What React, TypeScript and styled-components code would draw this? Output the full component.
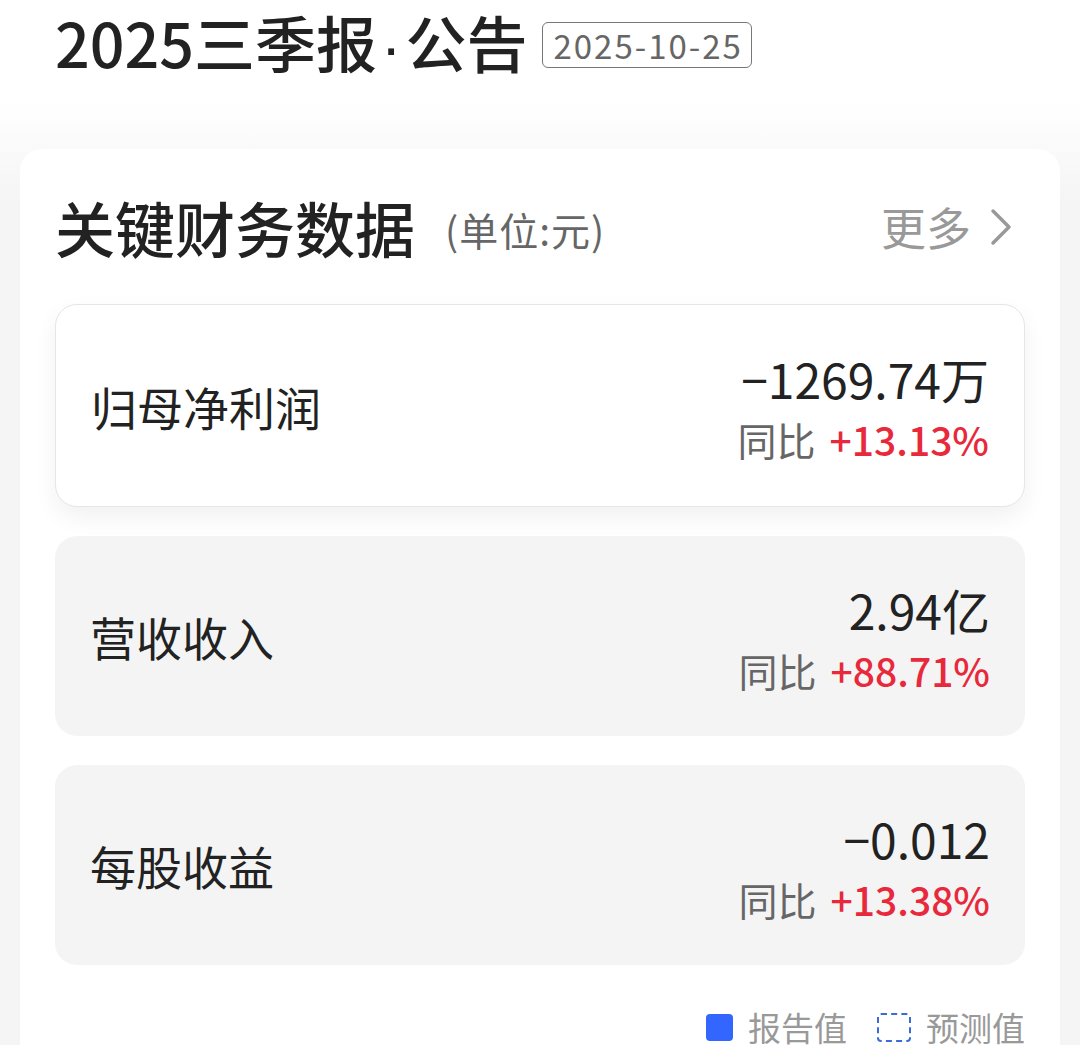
import * as React from "react";
import styled, { createGlobalStyle } from "styled-components";

const GlobalStyle = createGlobalStyle`
  html, body {
    margin: 0;
    padding: 0;
    background: #f5f5f5;
  }
  body {
    font-family: "Noto Sans CJK SC", "Noto Sans", sans-serif;
    color: #222;
  }
`;

const Page = styled.div`
  width: 1080px;
  height: 1045px;
  overflow: hidden;
  background: linear-gradient(to bottom, #ffffff 0px, #ffffff 100px, #f5f5f5 200px);
`;

const Header = styled.div`
  display: flex;
  align-items: center;
  gap: 15px;
  height: 90px;
  padding: 0 55px;
`;

const Title = styled.h1`
  margin: 0;
  flex-shrink: 0;
  white-space: nowrap;
  font-size: 61px;
  font-weight: 500;
  color: #222;
  line-height: 1.3;
`;

const Dot = styled.span`
  font-family: "Liberation Sans", sans-serif;
  margin: 0 4px;
`;

const DateBadge = styled.span`
  display: inline-flex;
  align-items: center;
  height: 46px;
  box-sizing: border-box;
  padding: 0 8px 0 10px;
  border: 1px solid #777;
  border-radius: 6px;
  font-size: 33px;
  letter-spacing: 2px;
  color: #666;
  line-height: 1;
`;

const Card = styled.div`
  margin: 59px 20px 0;
  background: #fff;
  border-radius: 22px;
  padding: 0 35px;
  min-height: 960px;
`;

const SectionHead = styled.div`
  display: flex;
  align-items: center;
  height: 155px;
`;

const SectionTitle = styled.h2`
  margin: 0;
  font-size: 60px;
  font-weight: 500;
  color: #222;
  line-height: 1.2;
`;

const Unit = styled.span`
  margin-left: 30px;
  font-size: 39px;
  letter-spacing: 1px;
  color: #666;
  margin-top: 4px;
`;

const More = styled.a`
  margin-left: auto;
  display: flex;
  align-items: center;
  gap: 18px;
  font-size: 45px;
  color: #999;
  text-decoration: none;
  margin-right: 12px;
`;

const List = styled.div`
  display: flex;
  flex-direction: column;
  gap: 29px;
`;

const Row = styled.div<{ $active?: boolean }>`
  display: flex;
  align-items: center;
  justify-content: space-between;
  height: ${({ $active }) => ($active ? "203px" : "200px")};
  box-sizing: border-box;
  padding: 0 35px;
  border-radius: 22px;
  background: ${({ $active }) => ($active ? "#fff" : "#f4f4f4")};
  border: ${({ $active }) => ($active ? "1px solid #e6e6e6" : "none")};
  box-shadow: ${({ $active }) => ($active ? "0 10px 24px rgba(0,0,0,0.06)" : "none")};
`;

const Label = styled.span`
  font-size: 46px;
  color: #222;
`;

const Values = styled.div`
  display: flex;
  flex-direction: column;
  align-items: flex-end;
  gap: 18px;
  margin-top: 2px;
`;

const Amount = styled.span`
  font-size: 48px;
  color: #222;
  line-height: 1;
`;

const Change = styled.span`
  font-size: 39px;
  color: #666;
  line-height: 1;
`;

const Pct = styled.span`
  color: #e8293b;
  font-weight: 500;
  margin-left: 14px;
`;

const Legend = styled.div`
  display: flex;
  justify-content: flex-end;
  align-items: center;
  gap: 30px;
  margin-top: 38px;
`;

const LegendItem = styled.span`
  display: flex;
  align-items: center;
  gap: 15px;
  font-size: 33px;
  color: #999;
`;

const Swatch = styled.span<{ $dashed?: boolean }>`
  display: inline-block;
  width: ${({ $dashed }) => ($dashed ? "34px" : "27px")};
  height: ${({ $dashed }) => ($dashed ? "29px" : "27px")};
  border-radius: 4px;
  box-sizing: border-box;
  background: ${({ $dashed }) => ($dashed ? "transparent" : "#3366ff")};
  border: ${({ $dashed }) => ($dashed ? "2px dashed #3a6bd8" : "none")};
`;

const rows = [
  { label: "归母净利润", amount: "−1269.74万", pct: "+13.13%", active: true },
  { label: "营收收入", amount: "2.94亿", pct: "+88.71%" },
  { label: "每股收益", amount: "−0.012", pct: "+13.38%" },
];

const Chevron = () => (
  <svg width="24" height="40" viewBox="0 0 24 40" fill="none">
    <path d="M4 4 L20 20 L4 36" stroke="#999" strokeWidth="3.5" strokeLinecap="round" strokeLinejoin="round" />
  </svg>
);

export default function App() {
  return (
    <Page>
      <GlobalStyle />
      <Header>
        <Title>
          2025三季报<Dot>·</Dot>公告
        </Title>
        <DateBadge>2025-10-25</DateBadge>
      </Header>
      <Card>
        <SectionHead>
          <SectionTitle>关键财务数据</SectionTitle>
          <Unit>(单位:元)</Unit>
          <More href="#">
            更多
            <Chevron />
          </More>
        </SectionHead>
        <List>
          {rows.map((r) => (
            <Row key={r.label} $active={r.active}>
              <Label>{r.label}</Label>
              <Values>
                <Amount>{r.amount}</Amount>
                <Change>
                  同比<Pct>{r.pct}</Pct>
                </Change>
              </Values>
            </Row>
          ))}
        </List>
        <Legend>
          <LegendItem>
            <Swatch />
            报告值
          </LegendItem>
          <LegendItem>
            <Swatch $dashed />
            预测值
          </LegendItem>
        </Legend>
      </Card>
    </Page>
  );
}
